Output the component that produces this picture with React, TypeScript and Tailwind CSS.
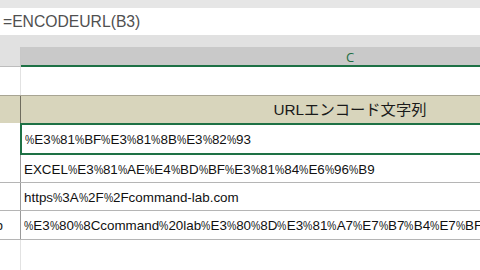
import React from 'react';

const rows = [
  '%E3%81%BF%E3%81%8B%E3%82%93',
  'EXCEL%E3%81%AE%E4%BD%BF%E3%81%84%E6%96%B9',
  'https%3A%2F%2Fcommand-lab.com',
  '%E3%80%8Ccommand%20lab%E3%80%8D%E3%81%A7%E7%B7%B4%E7%BF%92',
];

const cellFont = { fontFamily: '"Liberation Sans", "Noto Sans CJK JP", sans-serif' };

// the sheet's font draws a narrow percent sign
const CellText: React.FC<{ text: string }> = ({ text }) => (
  <span className="text-[13.4px] whitespace-nowrap text-[#111111]">
    {text.split('%').map((part, i) => (
      <React.Fragment key={i}>
        {i > 0 && <span className="inline-block w-[9.3px] scale-x-[0.78] origin-left">%</span>}
        {part}
      </React.Fragment>
    ))}
  </span>
);

const App: React.FC = () => {
  return (
    <div className="w-[480px] h-[270px] overflow-hidden bg-white text-[#1a1a1a]" style={cellFont}>
      {/* Formula bar */}
      <div className="h-[8px] bg-[#e6e6e6]" />
      <div className="h-[27px] bg-white flex items-center pl-[3px]">
        <span className="text-[15.7px] text-[#505050] leading-none" style={{ fontFamily: '"Liberation Sans", sans-serif' }}>
          =ENCODEURL(B3)
        </span>
      </div>
      <div className="h-[12px] bg-[#e1e1e1]" />

      {/* Column header */}
      <div className="flex h-[20px]">
        <div className="w-[21px] shrink-0 bg-[#e1e1e1] border-b border-[#bdbdbd] border-r border-r-[#c8c8c8]" />
        <div className="w-[658px] shrink-0 bg-[#c9c9c9] border-b-2 border-[#1e7145] flex items-center justify-center pt-[3px]">
          <span className="text-[13px] text-[#1e6e42]" style={{ fontFamily: '"Open Sans", sans-serif' }}>C</span>
        </div>
      </div>

      {/* Row 1: empty */}
      <div className="flex h-[28px]">
        <div className="w-[21px] shrink-0 border-r border-[#e2e2e2]" />
        <div className="flex-1" />
      </div>

      {/* Row 2: header */}
      <div className="flex h-[28px] bg-[#d8d5bc] border-t border-[#a8a593]">
        <div className="w-[21px] shrink-0 border-r border-[#6f6c5e]" />
        <div className="w-[658px] shrink-0 flex items-center justify-center pt-[1px]">
          <span className="text-[15.3px] leading-none">URLエンコード文字列</span>
        </div>
      </div>

      {/* Data rows */}
      {rows.map((text, i) => (
        <div
          key={i}
          className={`flex ${i === 0 ? 'h-[32px]' : i === 3 ? 'h-[29px]' : 'h-[28px]'} ${i === 0 ? '' : 'border-b border-[#b5b5b5]'}`}
        >
          <div className="w-[21px] shrink-0 border-r border-[#9a9a9a] overflow-hidden flex items-center pt-[3px]">
            {i === 3 && <span className="text-[13.4px] ml-[-15px] whitespace-nowrap">lab</span>}
          </div>
          {i === 0 ? (
            <div className="w-[700px] shrink-0 border-2 border-[#1e7145] ml-[-1px] flex items-center pl-[3px] pt-[3px]">
              <CellText text={text} />
            </div>
          ) : (
            <div className="flex-1 flex items-center pl-[3px] pt-[3px] overflow-hidden">
              <CellText text={text} />
            </div>
          )}
        </div>
      ))}

      {/* Empty area below */}
      <div className="flex h-[40px]">
        <div className="w-[21px] shrink-0 border-r border-[#e2e2e2]" />
        <div className="flex-1" />
      </div>
    </div>
  );
};

export default App;
